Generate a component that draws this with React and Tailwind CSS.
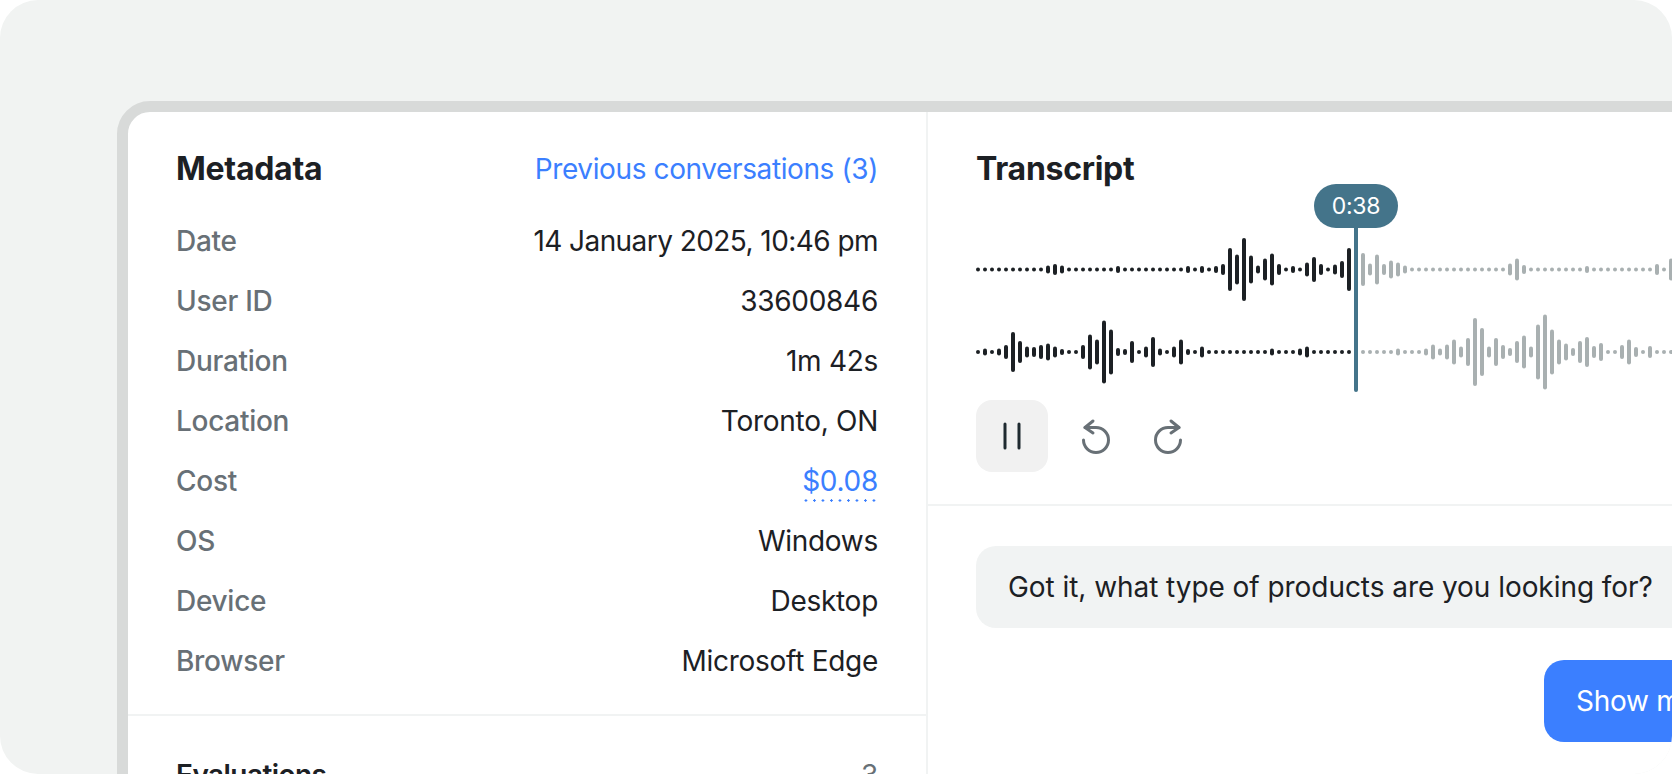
const font = { fontFamily: "Inter, sans-serif" };

// bar heights in px, one every 7px, read off the reference
const topPlayed = [3,3,3,3,3,3,3,3,3,3,8,11,8,3,3,3,3,3,3,3,7,3,3,3,3,3,3,3,3,3,7,3,7,3,7,11,43,30,63,28,8,22,32,11,3,7,3,14,25,11,3,10,17,43];
const topRest = [33,12,30,11,18,14,8,3,3,3,3,3,3,3,3,3,3,3,3,3,3,12,22,9,3,3,3,3,3,3,3,3,7,3,3,3,3,3,3,3,3,3,11,3,22];
const bottomPlayed = [3,7,3,7,14,40,22,11,10,14,17,11,6,3,3,14,35,25,63,45,8,6,22,3,11,30,7,3,11,25,6,3,11,3,3,3,3,3,3,3,3,3,7,3,3,3,7,11,3,3,3,3,3,3];
const bottomRest = [3,3,3,3,3,7,3,3,3,7,15,7,15,25,11,28,68,48,11,28,14,8,22,33,11,55,75,45,25,17,8,22,30,12,18,3,3,14,25,10,3,12,3,3,3];

function Wave({ played, rest, height }) {
  const mid = height / 2;
  const bar = (h, x, color) => (
    <line key={x} x1={x} x2={x} y1={mid - h / 2} y2={mid + h / 2} stroke={color} strokeWidth="4" strokeLinecap="round" />
  );
  return (
    <svg width="696" height={height} className="block">
      {played.map((h, i) => bar(Math.max(h - 4, 0.1), 2 + i * 7, "#1c2024"))}
      {rest.map((h, i) => bar(Math.max(h - 4, 0.1), 387 + i * 7, "#a9b0b1"))}
    </svg>
  );
}

function Row({ label, children }) {
  return (
    <div className="flex justify-between items-center h-[60px]">
      <span className="text-[#687076] font-medium">{label}</span>
      <span className="text-[#1c2024]">{children}</span>
    </div>
  );
}

export default function App() {
  return (
    <div className="h-screen overflow-hidden bg-white" style={font}>
      <div className="h-full bg-[#f1f3f2] rounded-[38px] pl-[117px] pt-[101px] overflow-hidden">
        <div className="w-[1600px] h-[800px] bg-white border-[11px] border-[#d8dad9] rounded-[33px] flex text-[28px] tracking-[-0.01em]">
          <div className="w-[800px] shrink-0 border-r-2 border-[#f1f3f3]">
            <div className="px-12 pt-[35px] pb-[23px] border-b-2 border-[#f1f3f3]">
              <div className="flex justify-between items-center h-[44px] mb-[20px]">
                <h3 className="text-[32px] font-bold text-[#1c2024]">Metadata</h3>
                <a className="text-[#3b7fff] tracking-[-0.014em]">Previous conversations (3)</a>
              </div>
              <Row label="Date">
                <span className="tracking-[-0.02em]">14 January 2025, 10:46 pm</span>
              </Row>
              <Row label="User ID">33600846</Row>
              <Row label="Duration">1m 42s</Row>
              <Row label="Location">Toronto, ON</Row>
              <Row label="Cost">
                <span className="inline-block text-[#3b7fff] bg-[radial-gradient(circle,#3b7fff_1.1px,transparent_1.4px)] bg-[length:8.5px_3px] bg-bottom bg-repeat-x">
                  $0.08
                </span>
              </Row>
              <Row label="OS">Windows</Row>
              <Row label="Device">Desktop</Row>
              <Row label="Browser">Microsoft Edge</Row>
            </div>
            <div className="px-12 pt-[38px] flex justify-between items-center">
              <span className="text-[#1c2024] font-semibold tracking-[-0.02em]">Evaluations</span>
              <span className="text-[#687076]">3</span>
            </div>
          </div>

          <div className="flex-1">
            <div className="px-12 pt-[35px] h-[394px] border-b-2 border-[#f1f3f3] relative">
              <h3 className="text-[32px] font-bold text-[#1c2024] h-[44px] leading-[44px]">Transcript</h3>

              {/* playhead */}
              <div className="absolute left-[426px] top-[116px] w-[4px] h-[164px] bg-[#44748a] rounded-b-full" />
              <div className="absolute left-[386px] top-[72px] w-[84px] h-[44px] rounded-[22px] bg-[#44748a] text-white text-[23px] flex items-center justify-center">
                0:38
              </div>

              <div className="mt-[42px] flex flex-col gap-[6px]">
                <Wave played={topPlayed} rest={topRest} height={73} />
                <Wave played={bottomPlayed} rest={bottomRest} height={80} />
              </div>

              <div className="flex items-center mt-[8px]">
                <button className="w-[72px] h-[72px] rounded-2xl bg-[#f1f1f1] flex items-center justify-center">
                  <svg width="18" height="28" viewBox="0 0 18 28" fill="none" stroke="#1f2a30" strokeWidth="3" strokeLinecap="round">
                    <path d="M2 2v24M16 2v24" />
                  </svg>
                </button>
                <svg className="ml-8" width="32" height="36" viewBox="0 0 32 36" fill="none" stroke="#687076" strokeWidth="3" strokeLinecap="round" strokeLinejoin="round">
                  <path d="M13 3 5 9.5l8 5.5" />
                  <path d="M5 9.5h11a12.5 12.5 0 1 1-12.5 12.5" />
                </svg>
                <svg className="ml-10" width="32" height="36" viewBox="0 0 32 36" fill="none" stroke="#687076" strokeWidth="3" strokeLinecap="round" strokeLinejoin="round">
                  <path d="M19 3l8 6.5-8 5.5" />
                  <path d="M27 9.5H16a12.5 12.5 0 1 0 12.5 12.5" />
                </svg>
              </div>
            </div>

            <div className="pl-12 pt-[40px] flex flex-col gap-[32px]">
              <div className="w-[760px] h-[82px] bg-[#f1f3f3] rounded-[20px] px-8 flex items-center text-[#1c2024] whitespace-nowrap tracking-[-0.002em]">
                Got it, what type of products are you looking for?
              </div>
              <div className="ml-[568px] w-[300px] h-[82px] bg-[#3b7fff] rounded-[20px] px-8 flex items-center text-white whitespace-nowrap">
                Show me running shoes
              </div>
            </div>
          </div>
        </div>
      </div>
    </div>
  );
}
